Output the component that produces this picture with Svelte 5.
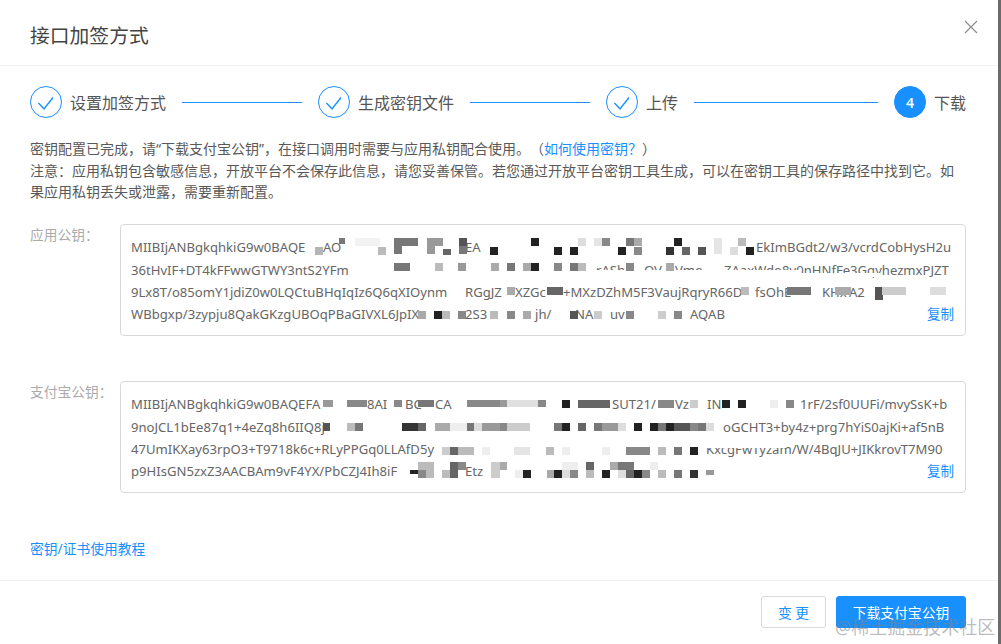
<script>
  const steps = [
    { label: '设置加签方式', done: true },
    { label: '生成密钥文件', done: true },
    { label: '上传', done: true, wide: true },
    { label: '下载', done: false, n: 4 }
  ];
  const panels = [
    {
      label: '应用公钥：',
      ox: 121, oy: 225,
      rows: [
        'MIIBIjANBgkqhkiG9w0BAQE',
        '36tHvIF+DT4kFFwwGTWY3ntS2YFm',
        '9Lx8T/o85omY1jdiZ0w0LQCtuBHqIqIz6Q6qXIOynm',
        'WBbgxp/3zypju8QakGKzgUBOqPBaGIVXL6JpIX'
      ],
      frags: [
        [323,0,'AO'],[465,0,'EA'],[756,0,'EkImBGdt2/w3/vcrdCobHysH2u'],
        [596,1,'rASh'],[644,1,'OV'],[675,1,'Vmo'],[724,1,'ZAaxWdo8v0nHNfFe3GqvhezmxPJZT'],
        [465,2,'RGgJZ'],[515,2,'XZGc'],[563,2,'+MXzDZhM5F3VaujRqryR66D'],[755,2,'fsOhE'],[822,2,'KHx'],[849,2,'A2'],
        [465,3,'2S3'],[535,3,'jh/'],[575,3,'NA'],[610,3,'uv'],[690,3,'AQAB']
      ],
      blocks: [
        [596,270,204,7,'#fff'],[800,273,80,4,'#fff'],
        [339,238,6,6,'#777'],[315,247,8,8,'#b5b5b5'],[355,238,25,8,'#f2f2f2'],[378,247,8,8,'#bbb'],
        [394,238,24,8,'#777'],[394,246,8,8,'#777'],[427,238,16,8,'#999'],[427,246,8,8,'#999'],[443,249,8,6,'#666'],
        [459,238,8,8,'#555'],[459,246,8,8,'#777'],[490,247,8,8,'#222'],
        [531,238,8,8,'#222'],[554,247,8,8,'#222'],[570,247,8,8,'#222'],[578,238,8,8,'#ddd'],[594,238,8,8,'#e5e5e5'],[602,238,8,8,'#888'],
        [618,247,8,8,'#222'],[626,238,8,8,'#777'],[634,238,8,8,'#aaa'],[634,247,8,8,'#888'],
        [666,247,8,8,'#333'],[674,238,8,8,'#222'],[682,247,8,8,'#666'],[698,247,8,8,'#555'],[714,238,8,16,'#e5e5e5'],
        [730,247,8,8,'#ddd'],[738,238,8,8,'#bbb'],[746,247,8,8,'#222'],
        [394,263,16,8,'#777'],[435,263,8,8,'#bbb'],[458,263,8,8,'#999'],[491,263,8,8,'#aaa'],
        [507,263,8,8,'#777'],[523,263,8,8,'#aaa'],[531,263,8,8,'#222'],[554,263,8,8,'#888'],[570,263,8,8,'#777'],[578,263,8,8,'#bbb'],
        [626,263,8,8,'#888'],[666,263,8,8,'#aaa'],
        [507,287,8,8,'#aaa'],[547,287,16,8,'#666'],[741,287,8,8,'#bbb'],[787,287,24,8,'#777'],[835,287,16,8,'#aaa'],
        [875,287,8,13,'#555'],[882,287,24,8,'#ccc'],[930,287,16,8,'#ddd'],
        [418,311,8,8,'#aaa'],[434,311,8,8,'#222'],[442,311,8,8,'#bbb'],[458,311,8,8,'#888'],[490,311,8,8,'#bbb'],
        [507,311,8,8,'#888'],[523,311,8,8,'#aaa'],[570,311,8,8,'#555'],[594,311,8,8,'#ccc'],[626,311,8,8,'#888'],[658,311,8,8,'#ccc'],[674,311,8,8,'#888']
      ]
    },
    {
      label: '支付宝公钥：',
      ox: 121, oy: 382,
      rows: [
        'MIIBIjANBgkqhkiG9w0BAQEFA',
        '9noJCL1bEe87q1+4eZq8h6IIQ8j',
        '47UmIKXay63rpO3+T9718k6c+RLyPPGq0LLAfD5y',
        'p9HIsGN5zxZ3AACBAm9vF4YX/PbCZJ4Ih8iF'
      ],
      frags: [
        [367,0,'8AI'],[405,0,'BC'],[435,0,'CA'],[612,0,'SUT21/'],[675,0,'Vz'],[707,0,'IN'],[800,0,'1rF/2sf0UUFi/mvySsK+b'],
        [723,1,'oGCHT3+by4z+prg7hYiS0ajKi+af5nB'],
        [706,2,'KxcgFwTyzam/W/4BqJU+JIKkrovT7M90'],
        [465,3,'Etz']
      ],
      blocks: [
        [706,444,80,4,'#fff'],
        [323,400,10,7,'#999'],[347,400,20,7,'#888'],[394,400,8,7,'#888'],[418,400,16,7,'#777'],[467,400,33,7,'#888'],
        [500,400,7,7,'#999'],[507,400,31,7,'#e0e0e0'],[538,400,8,7,'#888'],[562,400,8,8,'#222'],[578,400,32,8,'#666'],
        [658,400,16,8,'#888'],[690,400,8,8,'#ccc'],[722,400,8,8,'#222'],[738,400,8,8,'#222'],[770,400,8,8,'#eee'],[786,400,8,8,'#888'],
        [323,423,7,8,'#555'],[347,423,8,8,'#bbb'],[355,423,8,8,'#777'],[402,423,16,8,'#333'],[418,423,8,8,'#666'],[435,423,15,8,'#aaa'],
        [450,423,17,8,'#eee'],[467,423,8,8,'#777'],[474,423,8,8,'#ddd'],[482,423,18,8,'#999'],[500,423,7,8,'#888'],[507,423,23,8,'#ccc'],
        [554,423,8,8,'#777'],[562,423,8,8,'#222'],[578,423,8,8,'#666'],[594,423,8,8,'#777'],[602,423,16,8,'#999'],[618,423,8,8,'#ddd'],
        [634,423,8,8,'#222'],[650,423,8,8,'#222'],[658,423,8,8,'#777'],[666,423,8,8,'#222'],[674,423,16,8,'#555'],[690,423,8,8,'#888'],
        [698,423,8,8,'#777'],[706,423,8,8,'#ddd'],
        [442,447,8,8,'#ccc'],[450,447,8,8,'#666'],[458,447,16,8,'#bbb'],[482,447,8,8,'#eee'],
        [514,447,16,8,'#e5e5e5'],[546,447,8,8,'#bbb'],[562,447,8,8,'#eee'],[602,447,8,8,'#eee'],[626,447,24,8,'#888'],[658,447,8,8,'#bbb'],
        [674,447,8,8,'#777'],[690,447,8,8,'#222'],
        [418,462,16,16,'#bbb'],[410,470,8,4,'#222'],[418,470,8,8,'#888'],[442,470,8,8,'#bbb'],[450,462,8,16,'#666'],[458,462,8,8,'#888'],
        [491,462,9,16,'#ccc'],[500,462,7,8,'#aaa'],[515,470,8,8,'#eee'],[523,470,8,8,'#222'],[547,470,8,8,'#aaa'],[554,470,8,8,'#222'],
        [562,470,8,8,'#ddd'],[570,470,8,8,'#888'],[562,462,16,8,'#eee'],[586,462,8,8,'#666'],[586,470,8,8,'#bbb'],[602,470,8,8,'#222'],
        [610,462,8,8,'#aaa'],[618,462,16,8,'#777'],[618,470,8,8,'#ddd'],[626,470,8,8,'#666'],[634,470,8,8,'#222'],[642,470,8,8,'#888'],
        [650,462,8,8,'#eee'],[658,470,8,8,'#bbb'],[674,470,8,8,'#777'],[690,470,8,8,'#333'],[706,470,8,5,'#999']
      ]
    }
  ];
  const box = (b, p) => `left:${b[0] - p.ox}px;top:${b[1] - p.oy}px;width:${b[2]}px;height:${b[3]}px;background:${b[4]}`;
  const frag = (f, p) => `left:${f[0] - p.ox}px;top:${11 + f[1] * 22.4}px`;
</script>

<div class="page">
  <div class="dialog">
    <header class="head">
      <h1>接口加签方式</h1>
      <svg class="close" width="14" height="14" viewBox="0 0 14 14" aria-label="关闭"><path d="M1 1l12 12M13 1L1 13" /></svg>
    </header>

    <main class="body">
      <div class="steps">
        {#each steps as s, i}
          <div class="step">
            {#if s.done}
              <span class="dot">
                <svg width="30" height="30" viewBox="0 0 30 30"><path d="M7.5 16l5.5 6L22 10.5" /></svg>
              </span>
            {:else}
              <span class="dot on">{s.n}</span>
            {/if}
            <span class="step-label">{s.label}</span>
          </div>
          {#if i < steps.length - 1}
            <span class="line" class:wide={s.wide}></span>
          {/if}
        {/each}
      </div>

      <p class="intro">
        密钥配置已完成，请“下载支付宝公钥”，在接口调用时需要与应用私钥配合使用。（<a href="#how">如何使用密钥？</a>）<br />
        注意：应用私钥包含敏感信息，开放平台不会保存此信息，请您妥善保管。若您通过开放平台密钥工具生成，可以在密钥工具的保存路径中找到它。如果应用私钥丢失或泄露，需要重新配置。
      </p>

      {#each panels as p}
        <div class="field">
          <div class="label">{p.label}</div>
          <div class="key">
            {#each p.rows as r}<div class="row">{r}</div>{/each}
            {#each p.frags as f}<span class="frag" style={frag(f, p)}>{f[2]}</span>{/each}
            {#each p.blocks as b}<i class="px" style={box(b, p)}></i>{/each}
            <a class="copy" href="#copy">复制</a>
          </div>
        </div>
      {/each}

      <a class="guide" href="#guide">密钥/证书使用教程</a>
    </main>

    <footer class="foot">
      <button class="btn">变 更</button>
      <button class="btn primary">下载支付宝公钥</button>
    </footer>
  </div>
  <div class="bar"></div>
  <div class="mark">@稀土掘金技术社区</div>
</div>

<style>
  :global(body) {
    margin: 0;
    background: #fff;
  }
  .page {
    position: relative;
    display: flex;
    width: 1001px;
    height: 644px;
    overflow: hidden;
    font-family: "Noto Sans", "Noto Sans CJK SC", sans-serif;
    color: #595959;
    text-spacing-trim: space-all;
  }
  .dialog {
    flex: 1;
    display: flex;
    flex-direction: column;
    min-width: 0;
  }
  .bar {
    width: 3px;
    background: #6b6b6b;
  }
  .head {
    height: 65px;
    border-bottom: 1px solid #f0f0f0;
    padding: 0 20px 0 30px;
    display: flex;
    align-items: center;
    justify-content: space-between;
  }
  h1 {
    margin: 0 0 -6px;
    font-size: 19.8px;
    font-weight: 400;
    color: #444;
    line-height: 30px;
  }
  .close {
    margin-top: -12px;
  }
  .close path {
    stroke: #8c8c8c;
    stroke-width: 1.2;
    fill: none;
  }
  .body {
    flex: 1;
    padding: 20px 32px 0 30px;
    font-size: 14px;
  }
  .steps {
    display: flex;
    align-items: center;
    height: 32px;
  }
  .step {
    display: flex;
    align-items: center;
    gap: 8px;
  }
  .dot {
    box-sizing: border-box;
    width: 32px;
    height: 32px;
    border-radius: 50%;
    border: 1px solid #1890ff;
    display: flex;
    align-items: center;
    justify-content: center;
  }
  .dot path {
    stroke: #1890ff;
    stroke-width: 1.4;
    fill: none;
  }
  .dot.on {
    background: #1890ff;
    color: #fff;
    font-size: 14px;
    font-weight: 600;
  }
  .step-label {
    font-size: 16px;
    color: #555;
  }
  .line {
    width: 120px;
    height: 1px;
    background: #1890ff;
    margin: 0 16px;
  }
  .line.wide {
    flex: 1;
  }
  .intro {
    margin: 20px 0 0;
    line-height: 21.7px;
    color: #595959;
    font-size: 14px;
  }
  a {
    color: #1890ff;
    text-decoration: none;
  }
  .field {
    display: flex;
    margin-top: 45px;
  }
  .intro + .field {
    margin-top: 21px;
  }
  .label {
    width: 90px;
    flex: none;
    color: #ababab;
    line-height: 22px;
    font-size: 13.78px;
  }
  .key {
    position: relative;
    flex: 1;
    height: 90px;
    padding: 11px 10px 9px;
    border: 1px solid #d9d9d9;
    border-radius: 4px;
    font-size: 13.1px;
    line-height: 22.4px;
    color: #666;
    overflow: hidden;
  }
  .row {
    white-space: nowrap;
  }
  .frag {
    position: absolute;
    white-space: nowrap;
  }
  .px {
    position: absolute;
  }
  .copy {
    position: absolute;
    right: 11px;
    bottom: 10px;
    font-size: 13.5px;
  }
  .guide {
    display: block;
    margin-top: 45px;
    line-height: 22px;
    font-size: 13.78px;
  }
  .foot {
    box-sizing: border-box;
    height: 64px;
    border-top: 1px solid #f0f0f0;
    padding: 15px 32px 0 0;
    display: flex;
    justify-content: flex-end;
    align-items: flex-start;
    gap: 10px;
  }
  .btn {
    height: 32px;
    width: 65px;
    padding: 0;
    background: #fff;
    border: 1px solid #d9d9d9;
    border-radius: 3px;
    color: #1890ff;
    font: inherit;
    font-size: 13.78px;
  }
  .primary {
    width: 130px;
    background: #1890ff;
    border-color: #1890ff;
    color: #fff;
  }
  .mark {
    position: absolute;
    left: 835px;
    top: 614px;
    font-size: 18px;
    line-height: 26px;
    white-space: nowrap;
    color: rgba(130, 130, 130, 0.55);
  }
</style>
